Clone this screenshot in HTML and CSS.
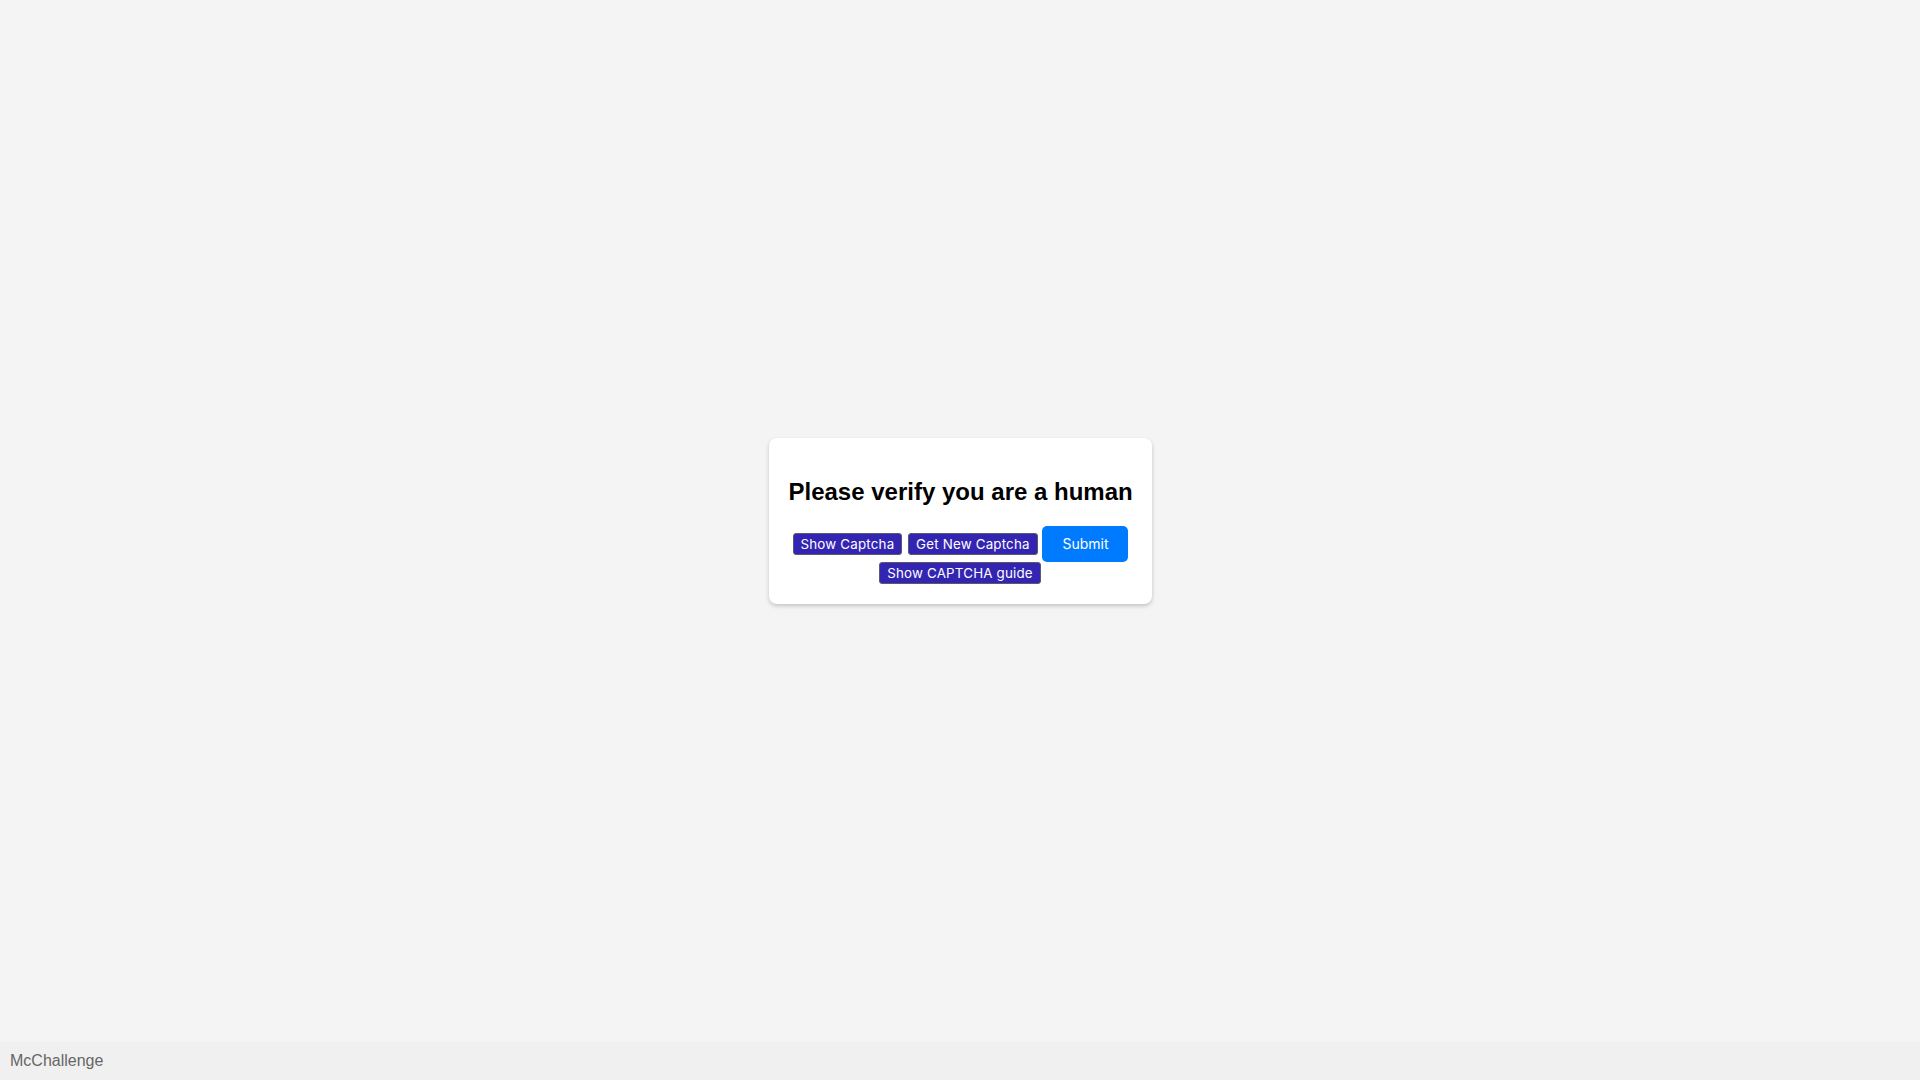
FILE: index.html
```html
<!DOCTYPE html>
<html lang="en">
<head>
<meta charset="utf-8">
<title>McChallenge</title>
<link rel="stylesheet" href="styles.css">
</head>
<body>
<main class="stage">
  <div class="card">
    <h2 class="title">Please verify you are a human</h2>
    <div class="actions">
      <button class="btn-small">Show Captcha</button>
      <button class="btn-small">Get New Captcha</button>
      <button class="btn-submit">Submit</button>
      <button class="btn-small">Show CAPTCHA guide</button>
    </div>
  </div>
</main>
<footer class="footer">McChallenge</footer>
</body>
</html>
```

FILE: styles.css
```css
html, body {
  margin: 0;
  padding: 0;
}
body {
  background: #f4f4f4;
  font-family: "Liberation Sans", Arial, sans-serif;
  min-height: 100vh;
  display: flex;
  flex-direction: column;
}
.stage {
  flex: 1;
  display: flex;
  align-items: center;
  justify-content: center;
}
.card {
  background: #ffffff;
  border-radius: 8px;
  padding: 20px;
  width: 343px;
  box-shadow: 0 2px 4px rgba(0, 0, 0, 0.2);
  text-align: center;
}
.title {
  font-size: 24px;
  font-weight: bold;
  color: #000;
  margin: 20px 0;
  line-height: normal;
  white-space: nowrap;
}
.actions {
  font-size: 13.33px;
  line-height: 22px;
}
.btn-small {
  font-family: Inter, "Liberation Sans", sans-serif;
  font-size: 13.33px;
  background: #3325b2;
  color: #ffffff;
  border: 1px solid #5a5a6a;
  border-radius: 3px;
  padding: 1px 7px;
  margin: 0 1px;
  height: 22px;
  vertical-align: middle;
  letter-spacing: 0.2px;
}
.btn-submit {
  font-family: Inter, "Liberation Sans", sans-serif;
  font-size: 14px;
  background: #007bff;
  color: #ffffff;
  border: none;
  border-radius: 5px;
  padding: 0 20px;
  height: 36px;
  vertical-align: middle;
}
.footer {
  background: #f0f0f0;
  color: #666666;
  font-size: 16px;
  padding: 10px;
  line-height: 18px;
}
```
